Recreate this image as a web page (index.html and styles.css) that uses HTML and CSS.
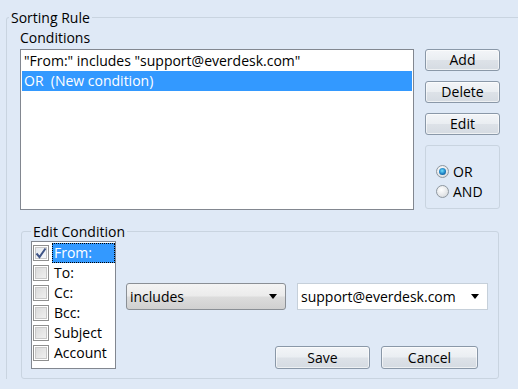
FILE: index.html
```html
<!DOCTYPE html>
<html lang="en">
<head>
    <meta charset="UTF-8">
    <title>Sorting Rule</title>
    <link rel="stylesheet" href="styles.css">
</head>
<body>
    <fieldset class="group rule">
        <legend>Sorting Rule</legend>

        <div class="top">
            <div class="label">Conditions</div>
            <ul class="listbox">
                <li>"From:" includes "support@everdesk.com"</li>
                <li class="selected">OR&nbsp; (New condition)</li>
            </ul>
            <div class="side">
                <button class="btn">Add</button>
                <button class="btn">Delete</button>
                <button class="btn">Edit</button>
                <div class="radio-box">
                    <label class="radio"><span class="dot checked"></span>OR</label>
                    <label class="radio"><span class="dot"></span>AND</label>
                </div>
            </div>
        </div>

        <fieldset class="group edit">
            <legend>Edit Condition</legend>
            <div class="edit-body">
                <ul class="checklist">
                    <li class="current">
                        <span class="check on">
                            <svg width="12" height="12" viewBox="0 0 12 12"><path d="M1.5 6.5 L4.5 10 L10.5 1.5" fill="none" stroke="#3f5486" stroke-width="2"/></svg>
                        </span>
                        <span class="text">From:</span>
                    </li>
                    <li><span class="check"></span><span class="text">To:</span></li>
                    <li><span class="check"></span><span class="text">Cc:</span></li>
                    <li><span class="check"></span><span class="text">Bcc:</span></li>
                    <li><span class="check"></span><span class="text">Subject</span></li>
                    <li><span class="check"></span><span class="text">Account</span></li>
                </ul>
                <div class="edit-right">
                    <div class="combos">
                        <div class="combo combo-op">includes<span class="arrow"></span></div>
                        <div class="combo combo-value">support@everdesk.com<span class="arrow"></span></div>
                    </div>
                    <div class="actions">
                        <button class="btn wide">Save</button>
                        <button class="btn wide">Cancel</button>
                    </div>
                </div>
            </div>
        </fieldset>
    </fieldset>
</body>
</html>
```

FILE: styles.css
```css
* {
    box-sizing: border-box;
    margin: 0;
    padding: 0;
}

html {
    overflow: hidden;
}

body {
    background-color: #dfe9f6;
    font-family: 'Open Sans', sans-serif;
    font-size: 14px;
    color: #000;
    height: 389px;
    overflow: hidden;
}

ul {
    list-style: none;
}

/* Group boxes */
.group {
    border: 1px solid #c9d4e0;
    border-radius: 3px;
    min-width: 0;
}

.group legend {
    line-height: 19px;
    padding: 0 2px;
}

/* outer group runs past the window, so no right/bottom edge */
.rule {
    margin: 8px -20px 0 6px;
    padding: 1px 0 0 13px;
    border-bottom: 0;
    border-radius: 3px 0 0 0;
}

.rule > legend {
    margin-left: -11px;
}

/* Conditions */
.top {
    display: grid;
    grid-template-columns: 394px 75px;
    column-gap: 11px;
    grid-template-areas:
        "label ."
        "list side";
}

.label {
    grid-area: label;
    line-height: 19px;
    margin-bottom: 2px;
}

.listbox {
    grid-area: list;
    height: 161px;
    background: #fff;
    border: 1px solid #828790;
    padding: 1px;
}

.listbox li {
    height: 20px;
    line-height: 20px;
    padding-left: 2px;
    white-space: nowrap;
}

.listbox li.selected {
    background: #3399ff;
    color: #fff;
}

.side {
    grid-area: side;
    display: flex;
    flex-direction: column;
    gap: 10px;
}

.btn {
    font: inherit;
    color: #000;
    height: 22px;
    line-height: 18px;
    border: 1px solid #8a98a8;
    border-radius: 3px;
    background: linear-gradient(#f3f5f8, #eaeef2 48%, #dde2e8 52%, #d5dbe2);
    box-shadow: inset 0 0 0 1px rgba(255, 255, 255, 0.6);
}

.radio-box {
    height: 64px;
    border: 1px solid #c9d4e0;
    border-radius: 3px;
    padding: 15px 0 0 10px;
}

.radio {
    display: flex;
    align-items: center;
    gap: 4px;
    height: 20px;
}

.dot {
    width: 13px;
    height: 13px;
    border-radius: 50%;
    border: 1px solid #8e979f;
    background: radial-gradient(circle at 40% 35%, #ffffff, #e4e6e8 60%, #c9cdd1);
    position: relative;
}

.dot.checked::after {
    content: "";
    position: absolute;
    left: 2px;
    top: 2px;
    width: 7px;
    height: 7px;
    border-radius: 50%;
    background: radial-gradient(circle at 45% 40%, #6ee0ff, #1d7fc2 55%, #0d3f6e);
}

/* Edit condition */
.edit {
    margin: 12px 0 0 1px;
    width: 478px;
    padding: 0 10px 9px 9px;
}

.edit-body {
    display: flex;
    gap: 10px;
}

.checklist {
    width: 86px;
    height: 128px;
    background: #fff;
    border: 1px solid #828790;
    padding: 1px 0 0 1px;
}

.checklist li {
    display: flex;
    align-items: center;
    height: 20px;
}

.check {
    width: 16px;
    height: 16px;
    border: 1px solid #8f8f8f;
    background: linear-gradient(135deg, #d6d6d6, #f4f4f4);
    box-shadow: inset 0 0 0 1px #fff, inset 0 0 0 2px #c8c8c8;
    display: flex;
    align-items: center;
    justify-content: center;
    margin-right: 3px;
}

.check.on {
    background: linear-gradient(135deg, #e2e6ec, #fafbfc);
}

.text {
    flex: 1;
    height: 20px;
    line-height: 20px;
    padding-left: 2px;
}

.current .text {
    background: #3399ff;
    color: #fff;
    outline: 1px dotted #000;
    outline-offset: -1px;
}

.edit-right {
    flex: 1;
    display: flex;
    flex-direction: column;
}

.combos {
    display: flex;
    gap: 11px;
    margin-top: 42px;
}

.combo {
    position: relative;
    height: 27px;
    line-height: 25px;
    padding-left: 3px;
    border-radius: 3px;
}

.combo-op {
    width: 160px;
    border: 1px solid #8a8f95;
    background: linear-gradient(#f4f4f4, #ebebeb 48%, #dcdcdc 52%, #d0d0d0);
}

.combo-value {
    width: 191px;
    border: 1px solid #c6d0da;
    border-radius: 0;
    background: #fff;
}

.arrow {
    position: absolute;
    right: 8px;
    top: 10px;
    border-left: 4px solid transparent;
    border-right: 4px solid transparent;
    border-top: 5px solid #000;
}

.actions {
    margin-top: auto;
    display: flex;
    justify-content: flex-end;
    gap: 11px;
    padding-right: 10px;
}

.btn.wide {
    width: 95px;
    height: 23px;
}

.btn.wide + .btn.wide {
    width: 97px;
}
```
